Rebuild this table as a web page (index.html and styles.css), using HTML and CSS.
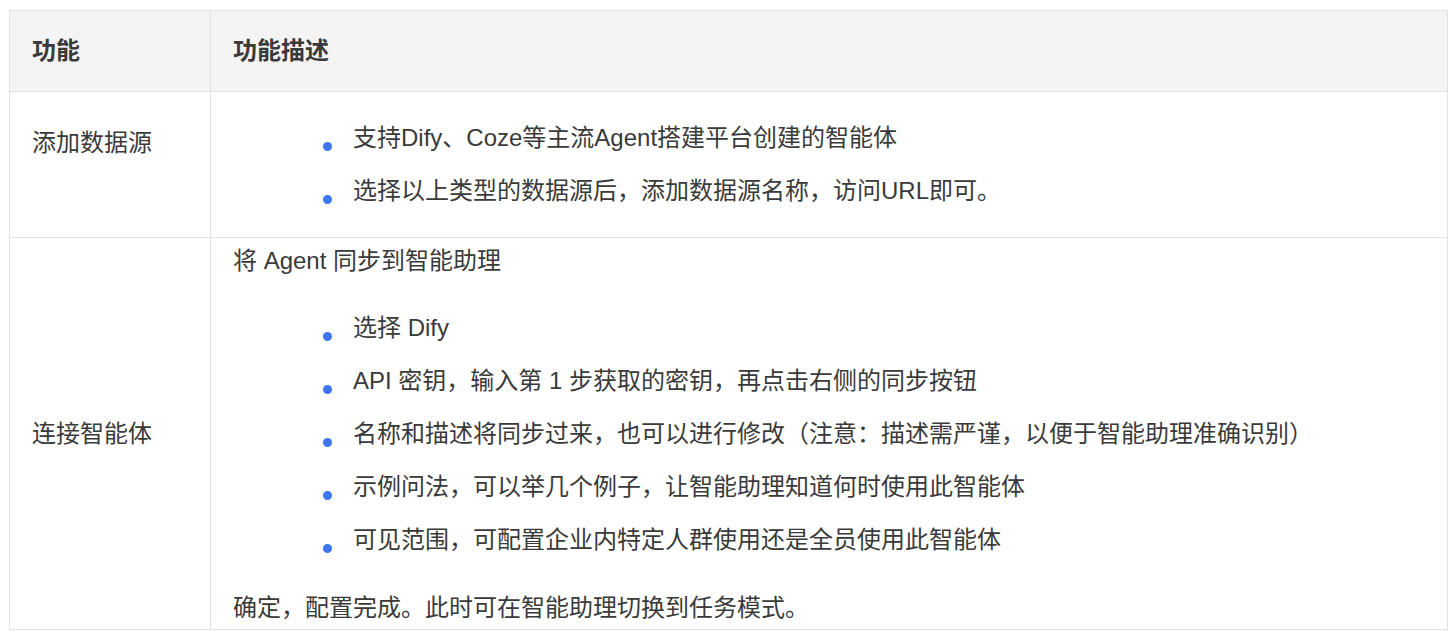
FILE: index.html
```html
<!DOCTYPE html>
<html lang="zh-CN">
<head>
    <meta charset="UTF-8">
    <meta name="viewport" content="width=device-width, initial-scale=1.0">
    <title>功能说明</title>
    <link rel="stylesheet" href="styles.css">
</head>
<body>
    <table class="feature-table">
        <thead>
            <tr>
                <th class="col-name">功能</th>
                <th>功能描述</th>
            </tr>
        </thead>
        <tbody>
            <tr>
                <td class="col-name col-name--raised">添加数据源</td>
                <td>
                    <ul class="dot-list">
                        <li>支持Dify、Coze等主流Agent搭建平台创建的智能体</li>
                        <li>选择以上类型的数据源后，添加数据源名称，访问URL即可。</li>
                    </ul>
                </td>
            </tr>
            <tr>
                <td class="col-name">连接智能体</td>
                <td class="cell-last">
                    <p class="lead">将 Agent 同步到智能助理</p>
                    <ul class="dot-list">
                        <li>选择 Dify</li>
                        <li>API 密钥，输入第 1 步获取的密钥，再点击右侧的同步按钮</li>
                        <li>名称和描述将同步过来，也可以进行修改（注意：描述需严谨，以便于智能助理准确识别）</li>
                        <li>示例问法，可以举几个例子，让智能助理知道何时使用此智能体</li>
                        <li>可见范围，可配置企业内特定人群使用还是全员使用此智能体</li>
                    </ul>
                    <p class="tail">确定，配置完成。此时可在智能助理切换到任务模式。</p>
                </td>
            </tr>
        </tbody>
    </table>
</body>
</html>
```

FILE: styles.css
```css
body {
    margin: 10px 0 0 9px;
    background-color: #fff;
    color: #3a3a3a;
    font-family: "Liberation Sans", "Noto Sans CJK SC", sans-serif;
    font-size: 24px;
    line-height: 30px;
}

.feature-table {
    width: 1439px;
    border-collapse: collapse;
    table-layout: fixed;
}

.feature-table th,
.feature-table td {
    border: 1px solid #e2e2e2;
    padding: 8px 22px;
    text-align: left;
    vertical-align: middle;
}

.feature-table th {
    background-color: #f4f4f4;
    font-weight: bold;
    padding-top: 25px;
    padding-bottom: 25px;
}

.col-name {
    width: 156px;
}

.col-name--raised {
    padding-bottom: 52px !important;
}

.cell-last {
    padding-bottom: 6px !important;
}

.lead {
    margin: 0 0 37px;
}

.tail {
    margin: 38px 0 0;
}

.dot-list {
    list-style: none;
    margin: 0;
    padding: 0 0 0 120px;
}

.dot-list li {
    position: relative;
    margin: 23px 0;
}

.dot-list li::before {
    content: "";
    position: absolute;
    left: -30px;
    top: 19px;
    width: 9px;
    height: 9px;
    border-radius: 50%;
    background-color: #3f74f0;
}
```
